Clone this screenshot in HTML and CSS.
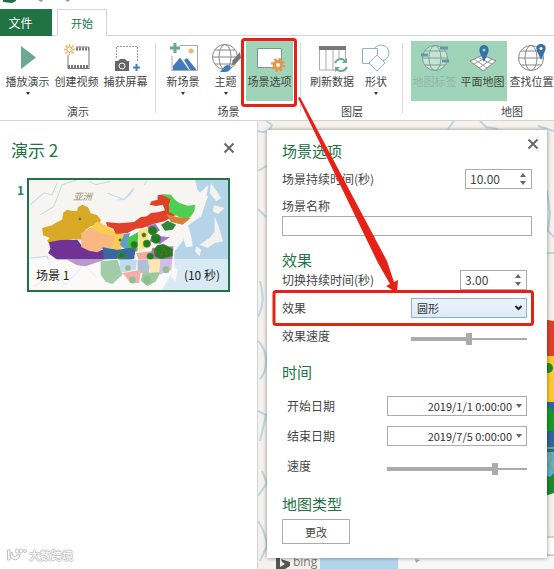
FILE: index.html
```html
<!DOCTYPE html>
<html lang="zh-CN">
<head>
<meta charset="utf-8">
<meta name="viewport" content="width=device-width, initial-scale=1">
<title>演示 2</title>
<link rel="stylesheet" href="styles.css">
</head>
<body>
<div class="app">
  <header>
    <div class="titlebar">
      <svg width="80" height="4" viewBox="0 0 80 4" aria-hidden="true"><path d="M3 0H16V1L12 3L3 2Z" fill="#1e7145"/><path d="M38 0H43L41 2ZM65 0H70L68 2Z" fill="#999"/></svg>
    </div>
    <nav class="tabs">
      <button class="tab tab-file">文件</button>
      <button class="tab tab-active">开始</button>
    </nav>
    <div class="ribbon">
      <section class="group group-tour">
        <div class="tools">
          <button class="tool">
            <svg width="28" height="28" viewBox="0 0 28 28"><path d="M7 2L22 13.500L7 25Z" fill="#6aa88f"/></svg>
            <span>播放演示</span><i class="caret"></i>
          </button>
          <button class="tool">
            <svg width="28" height="28" viewBox="0 0 28 28"><path d="M5 11V24.500H26V3H13" fill="none" stroke="#777"/><path d="M5 22.500H26M13 5H26" stroke="#777" stroke-width="3" stroke-dasharray="2 1"/><path d="M6.500 0V11M1 5.500H12M2.500 1.500L10.500 9.500M10.500 1.500L2.500 9.500" stroke="#e9b35f" stroke-width="1.500"/><circle cx="6.500" cy="5.500" r="2.500" fill="#fff" stroke="#e9b35f"/></svg>
            <span>创建视频</span>
          </button>
          <button class="tool">
            <svg width="28" height="28" viewBox="0 0 28 28"><path d="M4.500 14V2.500H25.500V18" fill="none" stroke="#999" stroke-dasharray="2 1"/><path d="M3 17H6L8 15H13L15 17H17V27H3Z" fill="#666"/><circle cx="10" cy="22" r="3" fill="#666" stroke="#fff"/><path d="M24.500 20V27M21 23.500H28" stroke="#477fb8" stroke-width="2"/></svg>
            <span>捕获屏幕</span>
          </button>
        </div>
        <h3>演示</h3>
      </section>
      <section class="group group-scene">
        <div class="tools">
          <button class="tool tool-new">
            <svg width="30" height="28" viewBox="0 0 30 28"><path d="M12 1.500H29.500V26.500H4V12" fill="#fff" stroke="#aaa"/><path d="M5 26V22L12 13.500L21 26ZM16 16L19 14L28 25V26H22Z" fill="#427cb8"/><circle cx="23" cy="7" r="2.500" fill="#edb56d"/><path d="M7 -1V9M2 4H12" stroke="#69aa8e" stroke-width="3"/></svg>
            <span>新场景</span><i class="caret"></i>
          </button>
          <button class="tool tool-theme">
            <svg width="30" height="28" viewBox="0 0 30 28"><g fill="none" stroke="#888"><circle cx="14" cy="13" r="12.500"/><ellipse cx="14" cy="13" rx="6" ry="12.500"/><path d="M1.500 13H26M4 6H24M4 20H24"/></g><path d="M29 8L21 17L24 20L30 14Z" fill="#777"/><path d="M22 17L24 20L20 22Z" fill="#777"/><path d="M8 28C12 27 12 21 17 21C22 22 20 28 14 28Z" fill="#427cb8"/></svg>
            <span>主题</span><i class="caret"></i>
          </button>
          <button class="tool tool-on tool-options">
            <svg width="28" height="28" viewBox="0 0 28 28"><path d="M1.500 4.500H25.500V23.500H1.500Z" fill="#fff" stroke="#789988"/><circle cx="22" cy="21" r="5.500" fill="none" stroke="#e69545" stroke-width="3" stroke-dasharray="2.300 2"/><circle cx="22" cy="21" r="3.500" fill="#fff" stroke="#e69545" stroke-width="3"/></svg>
            <span>场景选项</span>
          </button>
        </div>
        <h3>场景</h3>
      </section>
      <section class="group group-layer">
        <div class="tools">
          <button class="tool tool-refresh">
            <svg width="30" height="28" viewBox="0 0 30 28"><path d="M2.500 4.500H28.500V26H2.500ZM9 5V26M16 5V26M22 5V26" fill="none" stroke="#aaa"/><path d="M2 4H29" stroke="#777" stroke-width="4"/><circle cx="24" cy="21" r="7" fill="#fff"/><path d="M18 19Q20 15 24 15Q27 15 28 18M30 23Q28 27 24 27Q20 27 19 24" fill="none" stroke="#69aa8e" stroke-width="2"/><path d="M25 19H30V14ZM23 23H18V28Z" fill="#69aa8e"/></svg>
            <span>刷新数据</span>
          </button>
          <button class="tool tool-shape">
            <svg width="28" height="28" viewBox="0 0 28 28"><g fill="#fff" stroke="#8fb1cd"><circle cx="19" cy="9" r="8"/><path d="M.5 4.500H15.500V19.500H.5Z"/><path d="M15 11L23 19L15 27L7 19Z"/></g></svg>
            <span>形状</span><i class="caret"></i>
          </button>
        </div>
        <h3>图层</h3>
      </section>
      <section class="group group-map">
        <div class="tools">
          <button class="tool tool-on tool-labels" disabled>
            <svg width="28" height="28" viewBox="0 0 28 28"><g fill="none" stroke="#7f9f92"><circle cx="14" cy="14" r="12.500" fill="#c5e5d4"/><ellipse cx="14" cy="14" rx="6" ry="12.500"/><path d="M1.500 14H26.500M4 7H24M4 21H24"/></g><path d="M19 4H27M0 11H7M21 17H28" stroke="#5f98aa" stroke-width="3"/></svg>
            <span>地图标签</span>
          </button>
          <button class="tool tool-on">
            <svg width="28" height="28" viewBox="0 0 28 28"><path d="M14 11L27 17L14 27L1 17Z" fill="#fff" stroke="#888"/><path d="M10 14L23 20M5 15L18 24M18 13L5 20M23 15L10 24" stroke="#999"/><path d="M15 18L11 9C9 4 12 1 15 1S21 4 19 9Z" fill="#3572aa"/><circle cx="15" cy="6" r="1.500" fill="#a0d4b8"/></svg>
            <span>平面地图</span>
          </button>
          <button class="tool">
            <svg width="28" height="28" viewBox="0 0 28 28"><g fill="none" stroke="#888"><circle cx="13" cy="14" r="12.500"/><ellipse cx="13" cy="14" rx="6" ry="12.500"/><path d="M.5 14H25.500M3 7H23M3 21H23"/></g><path d="M23 16L19 7C17 2 20 0 23 0S29 2 27 7Z" fill="#3572aa"/><circle cx="23" cy="4.500" r="1.500" fill="#fff"/></svg>
            <span>查找位置</span>
          </button>
        </div>
        <h3>地图</h3>
      </section>
    </div>
  </header>

  <main>
    <aside class="tour">
      <div class="tour-head">
        <h1>演示 2</h1>
        <button class="close" aria-label="关闭演示"><svg width="12" height="12" viewBox="0 0 12 12"><path d="M1.500 1.500L10.500 10.500M10.500 1.500L1.500 10.500" stroke="#666" stroke-width="2"/></svg></button>
      </div>
      <div class="scene-row">
        <b class="scene-number">1</b>
        <button class="scene">
          <svg class="scene-map" viewBox="6 6 594 330" preserveAspectRatio="none" aria-hidden="true">
            <rect width="606" height="342" fill="#f7f5f1"/>
            <path d="M606 0H500L510 40L540 55L520 115L470 150L465 190L440 220V270L400 342H606Z" fill="#b5d4ea"/>
            <path d="M490 0L515 45L542 20L535 55L520 100L480 140L490 175L495 205L475 208L462 170L440 150L470 90L480 0Z" fill="#f7f5f1"/>
            <path d="M549 15L580 60L565 70L545 45ZM558 82L590 90L570 108L555 100ZM560 115L572 145L585 190L560 195L540 210L515 200L545 180L560 160ZM505 205L520 215L515 235L502 220ZM435 265L450 275L443 310L430 295Z" fill="#f4f2ed"/>
            <g fill="none" stroke="#c1dbea" stroke-width="3"><path d="M10 80L50 45L75 50L90 15M40 110L80 85L105 20L150 5M240 45L290 65L315 35M270 65Q300 70 320 30M185 10L205 20L250 10M350 20L360 5M10 240L60 235L75 280L110 300M20 325L90 290L115 320L170 260L210 300"/></g>
            <text x="138" y="67" class="asia">亚洲</text>
            <path d="M45 150L75 142L85 135L105 125L108 104L120 95L135 99L150 98L152 88L165 80L182 88L190 105L210 112L220 125L218 138L190 145L175 155L163 185L140 183L100 190L67 198L60 188L68 180L48 172Z" fill="#d7a925"/>
            <path d="M65 193L100 186L150 185L165 205L205 220L228 215L232 245L205 254L175 265L150 262L120 245L90 245L63 225L70 212Z" fill="#703395"/>
            <path d="M190 150L210 130L238 145L260 160L295 170L300 190L290 205L275 215L235 210L205 180Z" fill="#fccc50"/>
            <path d="M162 165L190 148L205 160L220 165L262 175L255 205L232 210L210 223L185 218L162 207Z" fill="#f8b783"/>
            <path d="M235 132L275 136L320 132L338 118L358 115L370 105L390 103L412 97L405 80L385 84L366 80L372 70L390 65L390 52L400 50L432 58L425 78V100L445 110L410 130L380 137L345 150L325 152L300 165L265 168L258 152L240 145Z" fill="#df4228"/>
            <path d="M400 48L430 50L440 64L455 75L480 83L502 80L500 98L490 115L480 122L455 118L425 103L423 82L430 65Z" fill="#4dd052"/>
            <path d="M415 108L450 118L488 120L465 140L430 132Z" fill="#db7d35"/>
            <path d="M400 140L420 128L445 140L435 155L412 158Z" fill="#35863d"/>
            <path d="M358 145L383 137L397 157L374 174ZM373 172L426 178L397 198L366 190Z" fill="#a870df"/>
            <path d="M290 168L307 165L303 185L320 205L295 215L277 200Z" fill="#649bcf"/>
            <path d="M300 180L332 162L330 220L300 225Z" fill="#44c84b"/>
            <path d="M333 157L360 150L364 205L335 220Z" fill="#f8e386"/>
            <path d="M225 208L270 215L325 207L320 242L285 252L270 242L230 245Z" fill="#3969a2"/>
            <path d="M325 225L372 220L390 245L335 248Z" fill="#f2aaa0"/>
            <path d="M374 210L437 205L431 275L395 290L360 270Z" fill="#a47bc8"/>
            <path d="M220 250L270 245L285 290L255 318L235 312L220 290Z" fill="#45964f"/>
            <path d="M275 246L328 245L325 275L280 285Z" fill="#83b8df"/>
            <path d="M330 245H362L365 285H330Z" fill="#5f80b0"/>
            <path d="M362 244H398L395 285H368Z" fill="#f7d060"/>
            <path d="M285 285L340 275L335 315H310Z" fill="#e85c56"/>
            <path d="M345 285L398 283L385 310L360 325L340 308Z" fill="#35963d"/>
            <g fill="#1a7e23" stroke="#648424" stroke-width="2"><circle cx="375" cy="158" r="13"/><circle cx="385" cy="182" r="14"/><circle cx="358" cy="197" r="11"/><circle cx="320" cy="200" r="10"/><circle cx="368" cy="235" r="10"/><path d="M270 240L280 218L298 238ZM382 235L379 215L390 202L408 199L435 213L434 234L400 243Z"/><circle cx="158" cy="123" r="3"/><circle cx="278" cy="186" r="4"/><circle cx="349" cy="171" r="6"/><circle cx="301" cy="270" r="8"/><circle cx="315" cy="306" r="10"/><circle cx="415" cy="275" r="10"/><circle cx="359" cy="306" r="13"/></g>
            <path d="M385 230L380 215L402 232L408 205L417 231L430 218" fill="none" stroke="#b54927" stroke-width="2"/>
          </svg>
          <span class="scene-caption"><span>场景 1</span><span>(10 秒)</span></span>
        </button>
      </div>
      <div class="watermark">
        <svg width="20" height="14" viewBox="0 0 20 14" aria-hidden="true"><g fill="none" stroke="#c2c2c2"><path d="M.5 2V12H3V2Z"/><path d="M5 4L3 8Q5 12 9 12Q13 11 13 6L10 7Q9 10 6 8Z"/><circle cx="10" cy="3" r="2"/><circle cx="14" cy="3" r="2"/><circle cx="18" cy="3" r="1.500"/></g></svg>
        <span>大数跨境</span>
      </div>
    </aside>

    <div class="map">
      <svg class="map-art" viewBox="0 0 296 448" preserveAspectRatio="xMaxYMin slice" aria-hidden="true">
        <rect width="296" height="448" fill="#f5f2ed"/>
        <g fill="none" stroke="#bad6e5" stroke-width="2"><path d="M0 10Q10 14 14 4L8 0M0 50L10 44M0 88L8 96M2 160Q8 180 0 196M0 220Q8 228 8 240T2 258M0 290L8 294L2 320M4 350L9 362L0 375M0 400Q8 412 9 425L2 440M190 8L196 0M222 0L228 6L240 8M280 5L296 10M289 70L292 92L290 110L296 116M289 132H296"/></g>
        <path d="M284 198L296 200V235H284Z" fill="#df4228"/>
        <path d="M284 235H296V282H284Z" fill="#fac92f"/>
        <circle cx="290" cy="247" r="5" fill="#228d28"/>
        <path d="M284 281H296V332H284Z" fill="#31639d"/>
        <path d="M284 290L292 286L296 292V310H284Z" fill="#159c25"/>
        <path d="M284 331H296V356H284Z" fill="#67a9df"/>
        <path d="M284 327H296M290 331L294 335L291 345L296 350" fill="none" stroke="#65b45d" stroke-width="2"/>
        <path d="M284 353L292 356L296 352V372L284 376Z" fill="#188c28"/>
        <path d="M280 416H298V434H280Z" fill="#fff" stroke="#aaa"/>
        <path d="M62 435H140V448H62Z" fill="#b3d5ea"/>
        <path d="M141 435H296V448H141Z" fill="#f7f7f7"/>
        <path d="M157 438L162 439L158 442Z" fill="#aaa"/>
        <path d="M18 435L22 437V446L27 443L24 441L23 438L32 441V445L22 451L18 448Z" fill="#555"/>
        <text x="35" y="445" class="bing">bing</text>
      </svg>

      <form class="options">
        <section class="block">
          <div class="options-head">
            <h2>场景选项</h2>
            <button type="button" class="close" aria-label="关闭选项"><svg width="12" height="12" viewBox="0 0 12 12"><path d="M1.500 1.500L10.500 10.500M10.500 1.500L1.500 10.500" stroke="#666" stroke-width="2"/></svg></button>
          </div>
          <div class="field">
            <label for="duration">场景持续时间(秒)</label>
            <span class="spin"><input id="duration" type="number" step="0.01" value="10.00"><span class="spin-arrows"><button type="button" class="up" aria-label="增加"></button><button type="button" class="down" aria-label="减少"></button></span></span>
          </div>
          <div class="field-stack">
            <label for="name">场景名称</label>
            <input id="name" class="text" type="text">
          </div>
        </section>
        <section class="block block-effect">
          <h2>效果</h2>
          <div class="field">
            <label for="transition">切换持续时间(秒)</label>
            <span class="spin"><input id="transition" type="number" step="0.01" value="3.00"><span class="spin-arrows"><button type="button" class="up" aria-label="增加"></button><button type="button" class="down" aria-label="减少"></button></span></span>
          </div>
          <div class="field">
            <label for="effect">效果</label>
            <span class="pick"><select id="effect"><option>圆形</option></select><svg width="9" height="6" viewBox="0 0 9 6" aria-hidden="true"><path d="M1.500 1L4.500 4L7.500 1" fill="none" stroke="#222" stroke-width="2"/></svg></span>
          </div>
          <div class="field">
            <label for="effect-speed">效果速度</label>
            <input id="effect-speed" class="slider" type="range" value="50" style="--value:50%">
          </div>
        </section>
        <section class="block block-time">
          <h2>时间</h2>
          <div class="field">
            <label for="start">开始日期</label>
            <span class="date"><input id="start" type="text" value="2019/1/1 0:00:00"><button type="button" class="down" aria-label="选择开始日期"></button></span>
          </div>
          <div class="field">
            <label for="end">结束日期</label>
            <span class="date"><input id="end" type="text" value="2019/7/5 0:00:00"><button type="button" class="down" aria-label="选择结束日期"></button></span>
          </div>
          <div class="field">
            <label for="speed">速度</label>
            <input id="speed" class="slider slider-wide" type="range" value="78" style="--value:78%">
          </div>
        </section>
        <section class="block block-type">
          <h2>地图类型</h2>
          <button type="button" class="change">更改</button>
        </section>
      </form>
    </div>
  </main>

  <svg class="callouts" width="554" height="569" viewBox="0 0 554 569" aria-hidden="true">
    <g fill="none" stroke="#e62217" stroke-width="3"><rect x="242.500" y="39.500" width="53" height="66" rx="2"/><rect x="274" y="291.500" width="258.500" height="33" rx="2"/></g>
    <path d="M298 98L300 97L387 261L394 282L398 280L397 293L386 286L390 284L378 263Z" fill="#e62217"/>
  </svg>
</div>
</body>
</html>
```
FILE: styles.css
```css
* { box-sizing: border-box; }
body {
  margin: 0;
  background: #fff;
  color: #444;
  font: 12px/20px "Noto Sans CJK SC", "Noto Sans", sans-serif;
}
h1, h2, h3 { margin: 0; font-weight: 400; }
button, input, select { font: inherit; color: inherit; margin: 0; padding: 0; border: 0; background: none; border-radius: 0; }
input { min-width: 0; outline: 0; }
svg { display: block; }

.app { position: relative; display: flex; flex-direction: column; min-height: 100vh; overflow: hidden; }
.titlebar { height: 9px; }

.tabs { display: flex; gap: 5px; height: 27px; border-bottom: 1px solid #d4d4d4; }
.tab { height: 27px; }
.tab-file { width: 52px; padding-right: 11px; background: #217346; color: #fff; }
.tab-active { width: 50px; border: 1px solid #d4d4d4; border-bottom-color: #fff; background: #fff; color: #217346; font-size: 11px; }

.ribbon { display: flex; height: 85px; overflow: hidden; border-bottom: 1px solid #d4d4d4; }
.group { position: relative; flex: none; padding-top: 5px; }
.group:not(:last-child)::after { content: ""; position: absolute; right: 0; top: 7px; bottom: 7px; width: 1px; background: #d9d9d9; }
.group h3 { font-size: 11px; line-height: 20px; text-align: center; }
.group-tour { width: 156px; }
.group-scene { width: 145px; }
.group-layer { width: 102px; }
.group-map { width: 218px; }
.tools { display: flex; padding-left: 8px; }
.group-tour .tools { padding-left: 3px; }
.group-scene .tools { padding-left: 5px; }
.tool { display: flex; flex-direction: column; align-items: center; justify-content: flex-start; flex: none; width: 49px; height: 60px; padding-top: 3px; font-size: 11px; line-height: 18px; white-space: nowrap; }
.tool svg { overflow: visible; }
.tool-new { width: 44px; }
.tool-theme { width: 41px; }
.tool-options, .tool-labels { width: 47px; }
.tool-refresh { width: 46px; }
.tool-shape { width: 42px; }
.tool-on { background: #a0d4b8; }
.tool-labels { color: #92b7a4; }
.caret { border: 2px solid transparent; border-top: 3px solid #333; margin-top: 2px; }

main { display: flex; flex: 1; }
.tour { display: flex; flex-direction: column; flex: none; width: 258px; border-right: 1px solid #d4d4d4; padding: 16px 27px 4px 0; }
.tour-head { display: flex; justify-content: space-between; padding-left: 11px; margin-right: -7px; }
.tour h1 { color: #217346; font-size: 17px; line-height: 26px; }
.close { display: flex; align-items: center; justify-content: center; width: 16px; height: 22px; }
.scene-row { display: flex; margin-top: 15px; }
.scene-number { width: 27px; padding-right: 3px; text-align: right; line-height: 24px; color: #1c8752; }
.scene { position: relative; flex: 1; height: 114px; border: 2px solid #217346; color: #222; }
.scene-map { width: 100%; height: 100%; }
.asia { font-size: 28px; font-style: italic; fill: #a08b72; }
.scene-caption { position: absolute; left: 0; right: 0; bottom: 0; height: 31px; display: flex; align-items: center; justify-content: space-between; padding: 0 8px 0 7px; background: rgb(255 255 255 / 50%); }
.watermark { display: flex; align-items: center; gap: 2px; margin-top: auto; padding-left: 7px; font-size: 11px; color: #fff; text-shadow: 1px 0 #c2c2c2, -1px 0 #c2c2c2, 0 1px #c2c2c2, 0 -1px #c2c2c2; }

.map { position: relative; flex: 1; padding: 9px 7px 11px 9px; overflow: hidden; background: #f5f2ed; }
.map-art { position: absolute; left: 0; top: 0; width: 100%; height: 100%; }
.bing { font: 12px "Open Sans", sans-serif; fill: #777; }

.options { position: relative; padding: 11px 15px 14px; background: #fff; box-shadow: 0 0 4px rgb(0 0 0 / 45%); }
.options h2 { color: #217346; font-size: 15px; line-height: 20px; }
.options-head { display: flex; justify-content: space-between; margin: 0 -9px 8px 0; }
.options-head .close { height: 6px; }
.field { display: flex; justify-content: space-between; align-items: center; height: 20px; }
.field-stack { display: flex; flex-direction: column; margin-top: 7px; }
.text { height: 20px; border: 1px solid #ababab; }
.spin { display: flex; width: 67px; height: 20px; border: 1px solid #ababab; }
.spin input { flex: 1; width: 0; padding-left: 4px; appearance: textfield; }
.spin input::-webkit-inner-spin-button { appearance: none; margin: 0; }
.spin-arrows { display: flex; flex-direction: column; justify-content: center; gap: 4px; width: 11px; }
.up, .down { width: 0; height: 0; border: 3px solid transparent; }
.up { border-top: 0; border-bottom: 4px solid #666; }
.down { border-bottom: 0; border-top: 4px solid #666; }

.block-effect { margin-top: 14px; }
.block-effect .field { padding-right: 5px; }
.block-effect .field + .field { margin-top: 8px; }
.pick { position: relative; width: 116px; height: 20px; }
.pick select { width: 100%; height: 100%; padding-left: 5px; border: 1px solid #8ab2d8; background: linear-gradient(#ecf4fc, #dcebfa); color: #333; font-size: 11px; line-height: 16px; appearance: none; }
.pick svg { position: absolute; right: 4px; top: 7px; pointer-events: none; }

.slider { appearance: none; width: 116px; height: 12px; margin-top: 6px; background: linear-gradient(#ababab, #ababab) 0 50% / var(--value) 4px no-repeat, linear-gradient(#ababab, #ababab) 0 50% / 100% 2px no-repeat; }
.slider::-webkit-slider-thumb { appearance: none; width: 6px; height: 12px; background: #ababab; }
.slider-wide { width: 140px; }

.block-time { margin-top: 16px; }
.block-time h2 { margin-bottom: 14px; }
.block-time .field { padding: 0 5px; }
.block-time .field + .field { margin-top: 10px; }
.date { display: flex; align-items: center; width: 140px; height: 20px; padding-right: 4px; border: 1px solid #ababab; color: #333; font-size: 11px; }
.date input { flex: 1; width: 0; height: 18px; padding-right: 4px; text-align: right; }

.block-type { margin-top: 18px; }
.change { display: block; width: 68px; height: 25px; margin-top: 5px; border: 1px solid #ababab; font-size: 11px; }

.callouts { position: absolute; left: 0; top: 0; pointer-events: none; }
```
